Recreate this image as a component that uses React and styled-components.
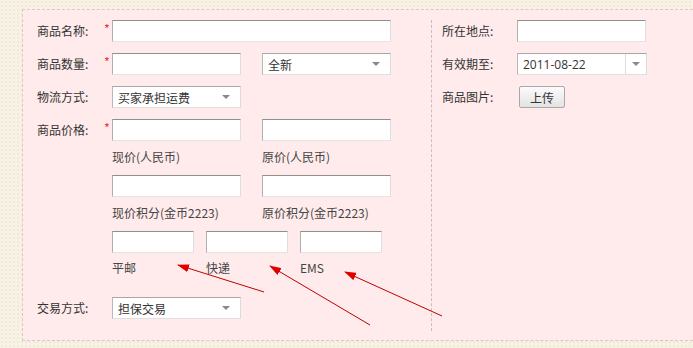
import styled, { createGlobalStyle } from 'styled-components';

const GlobalStyle = createGlobalStyle`
  html, body {
    margin: 0;
    padding: 0;
    overflow: hidden;
    background: #f8f2e5;
    font-family: "Noto Sans CJK SC", "Microsoft YaHei", sans-serif;
    font-size: 12px;
    color: #333;
  }
  * { box-sizing: border-box; }
`;

const Page = styled.div`
  position: relative;
  width: 693px;
  height: 348px;
  overflow: hidden;
  padding: 9px 0 0 22px;
  background-color: #f8f2e5;
  background-image: radial-gradient(rgba(210, 190, 160, 0.18) 1px, transparent 1px);
  background-size: 4px 4px;
`;

const Panel = styled.div`
  width: 671px;
  height: 332px;
  background: #ffebeb;
  border: 1px dashed #e2c4c0;
  border-right: 0;
  padding: 10px 0 9px 0;
  display: flex;
`;

const LeftCol = styled.div`
  width: 408px;
  padding: 0 0 0 14px;
`;

const RightCol = styled.div`
  flex: 1;
  border-left: 1px dashed #cbbdbd;
  padding-left: 10px;
`;

const Row = styled.div`
  display: flex;
  align-items: flex-start;
  margin-bottom: 11px;
`;

const Label = styled.div`
  width: 75px;
  flex: none;
  line-height: 22px;
  height: 22px;
  position: relative;
  color: #333;
  white-space: nowrap;
`;

const Star = styled.span`
  position: absolute;
  right: 3px;
  top: -3px;
  color: #e00;
  font-size: 11px;
  font-family: "Liberation Sans", sans-serif;
`;

const Input = styled.input`
  display: block;
  width: ${p => p.$w || 129}px;
  height: 22px;
  margin: 0;
  padding: 0 4px;
  background: #fff;
  border: 1px solid;
  border-color: #8f8f8f #dedede #e4e4e4 #b0b0b0;
  font: inherit;
  outline: none;
`;

const SelectBox = styled.div`
  width: ${p => p.$w || 129}px;
  height: 22px;
  background: #fff;
  border: 1px solid;
  border-color: #a8a8a8 #dcdcdc #e0e0e0 #b8b8b8;
  display: flex;
  align-items: center;
  padding-left: 5px;
  color: #333;
  font-size: 12px;
`;

const SelectText = styled.span`
  flex: 1;
  font-family: ${p => (p.$num ? '"Open Sans", "Liberation Sans", sans-serif' : 'inherit')};
`;

const Caret = styled.span`
  width: 21px;
  height: 100%;
  flex: none;
  display: flex;
  align-items: center;
  justify-content: center;
  border-left: ${p => (p.$split ? '1px solid #dedede' : 'none')};
  margin-right: ${p => (p.$split ? 0 : 4)}px;

  &::after {
    content: '';
    border-left: 4px solid transparent;
    border-right: 4px solid transparent;
    border-top: 4px solid #8a8a8a;
  }
`;

const Pair = styled.div`
  display: flex;
  gap: ${p => p.$gap || 21}px;
`;

const Stack = styled.div`
  display: flex;
  flex-direction: column;
`;

const Field = styled.div`
  display: flex;
  flex-direction: column;
`;

const Caption = styled.div`
  line-height: 16px;
  padding-top: ${p => p.$top || 8}px;
  padding-bottom: 10px;
  color: #444;
  font-family: "Noto Sans CJK SC", "Open Sans", sans-serif;
`;

const UploadButton = styled.button`
  margin: 0 0 0 2px;
  width: 46px;
  height: 22px;
  padding: 0;
  border: 1px solid #a9a9a9;
  border-radius: 2px;
  background: linear-gradient(#fbfbfb, #e3e3e3);
  font: inherit;
  color: #333;
`;

const Arrows = styled.svg`
  position: absolute;
  left: 0;
  top: 0;
  pointer-events: none;
`;

const arrows = [
  { x1: 264, y1: 292, x2: 178, y2: 265 },
  { x1: 370, y1: 325, x2: 270, y2: 266 },
  { x1: 442, y1: 316, x2: 345, y2: 272 },
];

export default function App() {
  return (
    <Page>
      <GlobalStyle />
      <Panel>
        <LeftCol>
          <Row>
            <Label>商品名称:<Star>*</Star></Label>
            <Input $w={279} />
          </Row>
          <Row>
            <Label>商品数量:<Star>*</Star></Label>
            <Pair>
              <Input />
              <SelectBox>
                <SelectText>全新</SelectText>
                <Caret />
              </SelectBox>
            </Pair>
          </Row>
          <Row>
            <Label>物流方式:</Label>
            <SelectBox>
              <SelectText>买家承担运费</SelectText>
              <Caret />
            </SelectBox>
          </Row>
          <Row>
            <Label>商品价格:<Star>*</Star></Label>
            <Stack>
              <Pair>
                <Field>
                  <Input />
                  <Caption>现价(人民币)</Caption>
                </Field>
                <Field>
                  <Input />
                  <Caption>原价(人民币)</Caption>
                </Field>
              </Pair>
              <Pair>
                <Field>
                  <Input />
                  <Caption>现价积分(金币2223)</Caption>
                </Field>
                <Field>
                  <Input />
                  <Caption>原价积分(金币2223)</Caption>
                </Field>
              </Pair>
              <Pair $gap={12}>
                <Field>
                  <Input $w={82} />
                  <Caption $top={7}>平邮</Caption>
                </Field>
                <Field>
                  <Input $w={82} />
                  <Caption $top={7}>快递</Caption>
                </Field>
                <Field>
                  <Input $w={82} />
                  <Caption $top={7}>EMS</Caption>
                </Field>
              </Pair>
            </Stack>
          </Row>
          <Row>
            <Label>交易方式:</Label>
            <SelectBox>
              <SelectText>担保交易</SelectText>
              <Caret />
            </SelectBox>
          </Row>
        </LeftCol>
        <RightCol>
          <Row>
            <Label>所在地点:</Label>
            <Input />
          </Row>
          <Row>
            <Label>有效期至:</Label>
            <SelectBox $w={130}>
              <SelectText $num>2011-08-22</SelectText>
              <Caret $split />
            </SelectBox>
          </Row>
          <Row>
            <Label>商品图片:</Label>
            <UploadButton type="button">上传</UploadButton>
          </Row>
        </RightCol>
      </Panel>
      <Arrows width="693" height="348" viewBox="0 0 693 348">
        <defs>
          <marker id="head" markerWidth="12" markerHeight="8" refX="11" refY="4" orient="auto" markerUnits="userSpaceOnUse">
            <path d="M0,0 L12,4 L0,8 Z" fill="#e00000" />
          </marker>
        </defs>
        {arrows.map((a, i) => (
          <line key={i} x1={a.x1} y1={a.y1} x2={a.x2} y2={a.y2} stroke="#c00000" strokeWidth="1" markerEnd="url(#head)" />
        ))}
      </Arrows>
    </Page>
  );
}
